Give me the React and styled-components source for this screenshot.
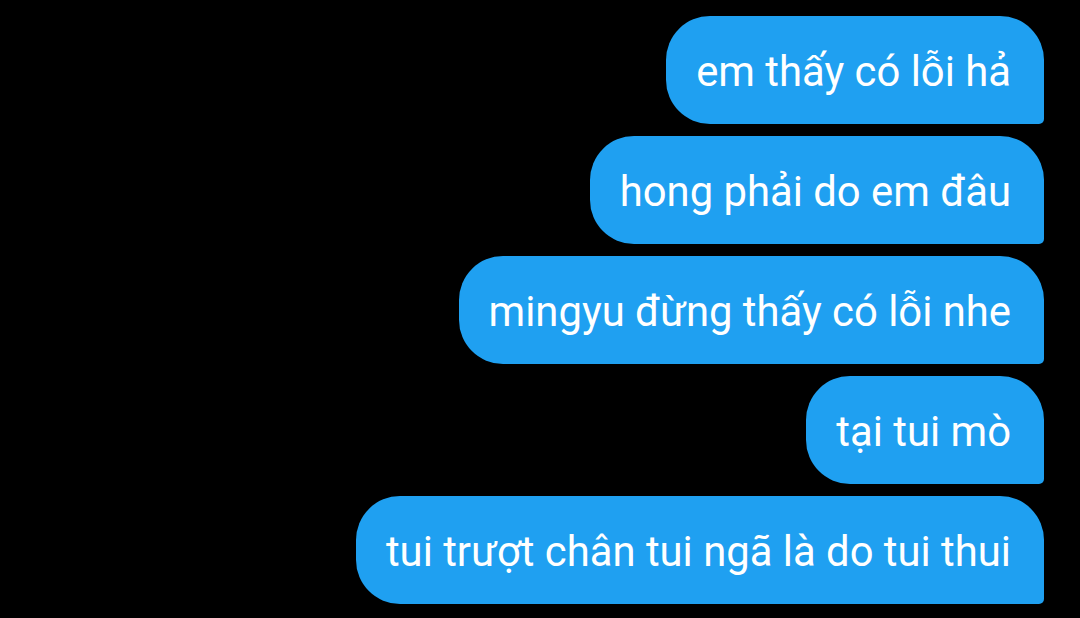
import React from 'react';
import styled, { createGlobalStyle } from 'styled-components';

const GlobalStyle = createGlobalStyle`
    html, body {
        margin: 0;
        padding: 0;
        background: #000;
    }
`;

const Thread = styled.div`
    display: flex;
    flex-direction: column;
    align-items: flex-end;
    gap: 12px;
    padding: 16px 36px 0 0;
    width: 1080px;
    height: 618px;
    box-sizing: border-box;
    background: #000;
    overflow: hidden;
`;

const Bubble = styled.div`
    display: flex;
    align-items: center;
    height: 108px;
    box-sizing: border-box;
    padding: 2px 33px 0 30px;
    background: #1fa0f1;
    color: #fff;
    font-family: Roboto, "Liberation Sans", sans-serif;
    font-size: 41.8px;
    white-space: nowrap;
    border-radius: 44px 44px 5px 44px;
`;

const messages = [
    'em thấy có lỗi hả',
    'hong phải do em đâu',
    'mingyu đừng thấy có lỗi nhe',
    'tại tui mò',
    'tui trượt chân tui ngã là do tui thui',
];

const App = () => (
    <>
        <GlobalStyle />
        <Thread>
            {messages.map((text) => (
                <Bubble key={text}>{text}</Bubble>
            ))}
        </Thread>
    </>
);

export default App;
